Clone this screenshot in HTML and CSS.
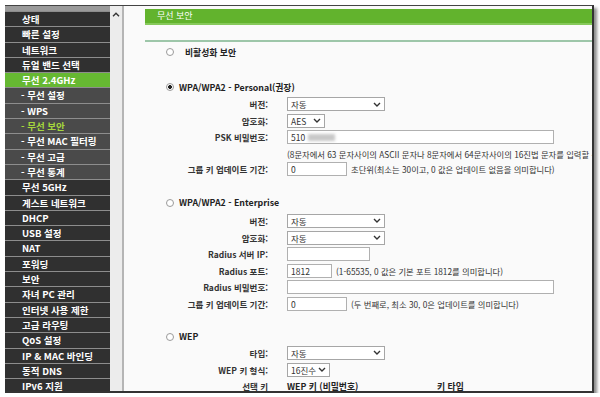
FILE: index.html
```html
<!DOCTYPE html>
<html lang="ko">
<head>
    <meta charset="UTF-8">
    <meta name="viewport" content="width=device-width, initial-scale=1.0">
    <title>무선 보안</title>
    <link rel="stylesheet" href="styles.css">
</head>
<body>
    <div class="frame">
        <nav class="sidebar">
            <div class="menu-top"></div>
            <a class="menu-item">상태</a>
            <a class="menu-item">빠른 설정</a>
            <a class="menu-item">네트워크</a>
            <a class="menu-item">듀얼 밴드 선택</a>
            <a class="menu-item active">무선 2.4GHz</a>
            <a class="menu-item sub">- 무선 설정</a>
            <a class="menu-item sub">- WPS</a>
            <a class="menu-item sub current">- 무선 보안</a>
            <a class="menu-item sub">- 무선 MAC 필터링</a>
            <a class="menu-item sub">- 무선 고급</a>
            <a class="menu-item sub">- 무선 통계</a>
            <a class="menu-item">무선 5GHz</a>
            <a class="menu-item">게스트 네트워크</a>
            <a class="menu-item">DHCP</a>
            <a class="menu-item">USB 설정</a>
            <a class="menu-item">NAT</a>
            <a class="menu-item">포워딩</a>
            <a class="menu-item">보안</a>
            <a class="menu-item">자녀 PC 관리</a>
            <a class="menu-item">인터넷 사용 제한</a>
            <a class="menu-item">고급 라우팅</a>
            <a class="menu-item">QoS 설정</a>
            <a class="menu-item">IP &amp; MAC 바인딩</a>
            <a class="menu-item">동적 DNS</a>
            <a class="menu-item">IPv6 지원</a>
        </nav>

        <div class="scroll">
            <svg width="8" height="5" viewBox="0 0 8 5"><polyline points="1,4.2 4,1.2 7,4.2" fill="none" stroke="#333" stroke-width="1.4"/></svg>
        </div>

        <main class="content">
            <h1 class="title">무선 보안</h1>
            <hr class="rule">

            <label class="option opt-none"><input type="radio" name="sec"><span>비활성화 보안</span></label>

            <label class="option opt-personal"><input type="radio" name="sec" checked><span>WPA/WPA2 - Personal(권장)</span></label>
            <div class="fields fields-personal">
                <div class="row">
                    <span class="lbl">버전:</span>
                    <div class="ctl"><div class="sel w-sel"><span>자동</span><svg width="8" height="5" viewBox="0 0 8 5"><polyline points="1,1 4,4 7,1" fill="none" stroke="#333" stroke-width="1.4"/></svg></div></div>
                </div>
                <div class="row">
                    <span class="lbl">암호화:</span>
                    <div class="ctl"><div class="sel w-aes"><span>AES</span><svg width="8" height="5" viewBox="0 0 8 5"><polyline points="1,1 4,4 7,1" fill="none" stroke="#333" stroke-width="1.4"/></svg></div></div>
                </div>
                <div class="row">
                    <span class="lbl">PSK 비밀번호:</span>
                    <div class="ctl"><div class="input w-long"><span>510</span><span class="blur"></span></div></div>
                </div>
                <div class="row help">
                    <span class="lbl"></span>
                    <div class="ctl note">(8문자에서 63 문자사이의 ASCII 문자나 8문자에서 64문자사이의 16진법 문자를 입력할 수</div>
                </div>
                <div class="row">
                    <span class="lbl">그룹 키 업데이트 기간:</span>
                    <div class="ctl"><div class="input w-key">0</div><span class="note">초단위(최소는 30이고, 0 값은 업데이트 없음을 의미합니다)</span></div>
                </div>
            </div>

            <label class="option opt-ent"><input type="radio" name="sec"><span>WPA/WPA2 - Enterprise</span></label>
            <div class="fields fields-ent">
                <div class="row">
                    <span class="lbl">버전:</span>
                    <div class="ctl"><div class="sel w-sel"><span>자동</span><svg width="8" height="5" viewBox="0 0 8 5"><polyline points="1,1 4,4 7,1" fill="none" stroke="#333" stroke-width="1.4"/></svg></div></div>
                </div>
                <div class="row">
                    <span class="lbl">암호화:</span>
                    <div class="ctl"><div class="sel w-sel"><span>자동</span><svg width="8" height="5" viewBox="0 0 8 5"><polyline points="1,1 4,4 7,1" fill="none" stroke="#333" stroke-width="1.4"/></svg></div></div>
                </div>
                <div class="row">
                    <span class="lbl">Radius 서버 IP:</span>
                    <div class="ctl"><div class="input w-ip"></div></div>
                </div>
                <div class="row">
                    <span class="lbl">Radius 포트:</span>
                    <div class="ctl"><div class="input w-port">1812</div><span class="note">(1-65535, 0 값은 기본 포트 1812를 의미합니다)</span></div>
                </div>
                <div class="row">
                    <span class="lbl">Radius 비밀번호:</span>
                    <div class="ctl"><div class="input w-long"></div></div>
                </div>
                <div class="row">
                    <span class="lbl">그룹 키 업데이트 기간:</span>
                    <div class="ctl"><div class="input w-key">0</div><span class="note">(두 번째로, 최소 30, 0은 업데이트를 의미합니다)</span></div>
                </div>
            </div>

            <label class="option opt-wep"><input type="radio" name="sec"><span>WEP</span></label>
            <div class="fields fields-wep">
                <div class="row">
                    <span class="lbl">타입:</span>
                    <div class="ctl"><div class="sel w-sel"><span>자동</span><svg width="8" height="5" viewBox="0 0 8 5"><polyline points="1,1 4,4 7,1" fill="none" stroke="#333" stroke-width="1.4"/></svg></div></div>
                </div>
                <div class="row">
                    <span class="lbl">WEP 키 형식:</span>
                    <div class="ctl"><div class="sel w-hex"><span>16진수</span><svg width="8" height="5" viewBox="0 0 8 5"><polyline points="1,1 4,4 7,1" fill="none" stroke="#333" stroke-width="1.4"/></svg></div></div>
                </div>
                <div class="row">
                    <span class="lbl">선택 키</span>
                    <div class="ctl head"><span class="col-key">WEP 키 (비밀번호)</span><span>키 타입</span></div>
                </div>
            </div>
        </main>
    </div>
</body>
</html>
```

FILE: styles.css
```css
body {
    margin: 0;
    padding: 0;
    background-color: #fff;
    font-family: "Noto Sans CJK KR", "Liberation Sans", sans-serif;
    color: #333;
}

.frame {
    display: flex;
    margin: 5px 0 0 5px;
    width: 587px;
    height: 385px;
    border-top: 1px solid #444;
    border-right: 2px solid #333;
    border-bottom: 2px solid #333;
    box-shadow: 3px 3px 3px rgba(0, 0, 0, 0.45);
    background-color: #fafafa;
    overflow: hidden;
}

/* menu */
.sidebar {
    flex: none;
    display: flex;
    flex-direction: column;
    width: 105px;
    background-color: #303030;
}

.menu-top {
    flex: none;
    height: 5px;
    background-color: #9a9a9a;
}

.menu-item {
    flex: none;
    display: block;
    height: 14.3px;
    line-height: 14.3px;
    padding-left: 17px;
    border-top: 1px solid #8d8d8d;
    color: #fff;
    font-size: 9.5px;
    font-weight: bold;
    white-space: nowrap;
}

.menu-item.sub {
    padding-left: 16px;
    background-color: #4a4a4a;
}

.menu-item.active {
    background-color: #66b832;
}

.menu-item.current {
    color: #a5d63c;
}

.scroll {
    flex: none;
    width: 12px;
    padding-top: 6px;
    background-color: #ececec;
    border-right: 2px solid #b5b5b5;
    text-align: center;
}

.scroll svg {
    display: block;
    margin: 0 auto;
}

/* content */
.content {
    flex: 1;
    min-width: 0;
}

.title {
    margin: 3px 0 0 21px;
    height: 14px;
    line-height: 14px;
    padding-left: 12px;
    background-color: #62b32d;
    border-bottom: 2px solid #86c95a;
    color: #fff;
    font-size: 9px;
    font-weight: normal;
}

.rule {
    margin: 15px 0 0 21px;
    height: 0;
    border: 0;
    border-top: 2px solid #9dc6a9;
}

.option {
    display: flex;
    align-items: center;
    height: 12px;
    margin-left: 42px;
    font-size: 8.8px;
    font-weight: bold;
    color: #222;
}

.option input {
    appearance: none;
    -webkit-appearance: none;
    width: 8px;
    height: 8px;
    margin: 0 5px 0 0;
    border: 1px solid #9a9a9a;
    border-radius: 50%;
    background-color: #fff;
}

.option input:checked {
    background: radial-gradient(circle, #222 0 1.6px, #fff 2.2px);
}

.opt-none {
    margin-top: 4px;
}

.opt-none span {
    margin-left: 6px;
}

.opt-personal {
    margin-top: 23px;
}

.opt-ent {
    margin-top: 21px;
}

.opt-wep {
    margin-top: 20px;
}

.fields {
    display: flex;
    flex-direction: column;
    gap: 2.6px;
}

.fields-personal {
    margin-top: 4px;
}

.fields-ent {
    margin-top: 5px;
}

.fields-wep {
    margin-top: 3px;
}

.row {
    display: grid;
    grid-template-columns: 144px auto;
    column-gap: 19px;
    align-items: center;
    height: 14px;
}

.row.help {
    height: 12.6px;
}

.lbl {
    text-align: right;
    font-size: 8.5px;
    font-weight: bold;
    color: #333;
    white-space: nowrap;
}

.ctl {
    display: flex;
    align-items: center;
    gap: 4px;
    height: 14px;
    white-space: nowrap;
}

.note {
    font-size: 8.3px;
    color: #333;
}

.sel,
.input {
    box-sizing: border-box;
    display: flex;
    align-items: center;
    height: 14px;
    padding: 0 3px;
    background-color: #fff;
    font-size: 8.5px;
    color: #333;
}

.sel {
    justify-content: space-between;
    border: 1px solid #a6a6a6;
}

.input {
    border: 1px solid #b0b0b0;
}

.blur {
    width: 27px;
    height: 7px;
    margin-left: 3px;
    background-color: #c8c8c8;
    filter: blur(1.5px);
}

.w-sel { width: 98px; }
.w-aes { width: 38px; }
.w-hex { width: 43px; }
.w-long { width: 267px; }
.w-ip { width: 83px; }
.w-port { width: 45px; }
.w-key { width: 60px; }

.head {
    gap: 0;
    font-size: 8.8px;
    font-weight: bold;
    color: #222;
}

.col-key {
    width: 150px;
}
```
